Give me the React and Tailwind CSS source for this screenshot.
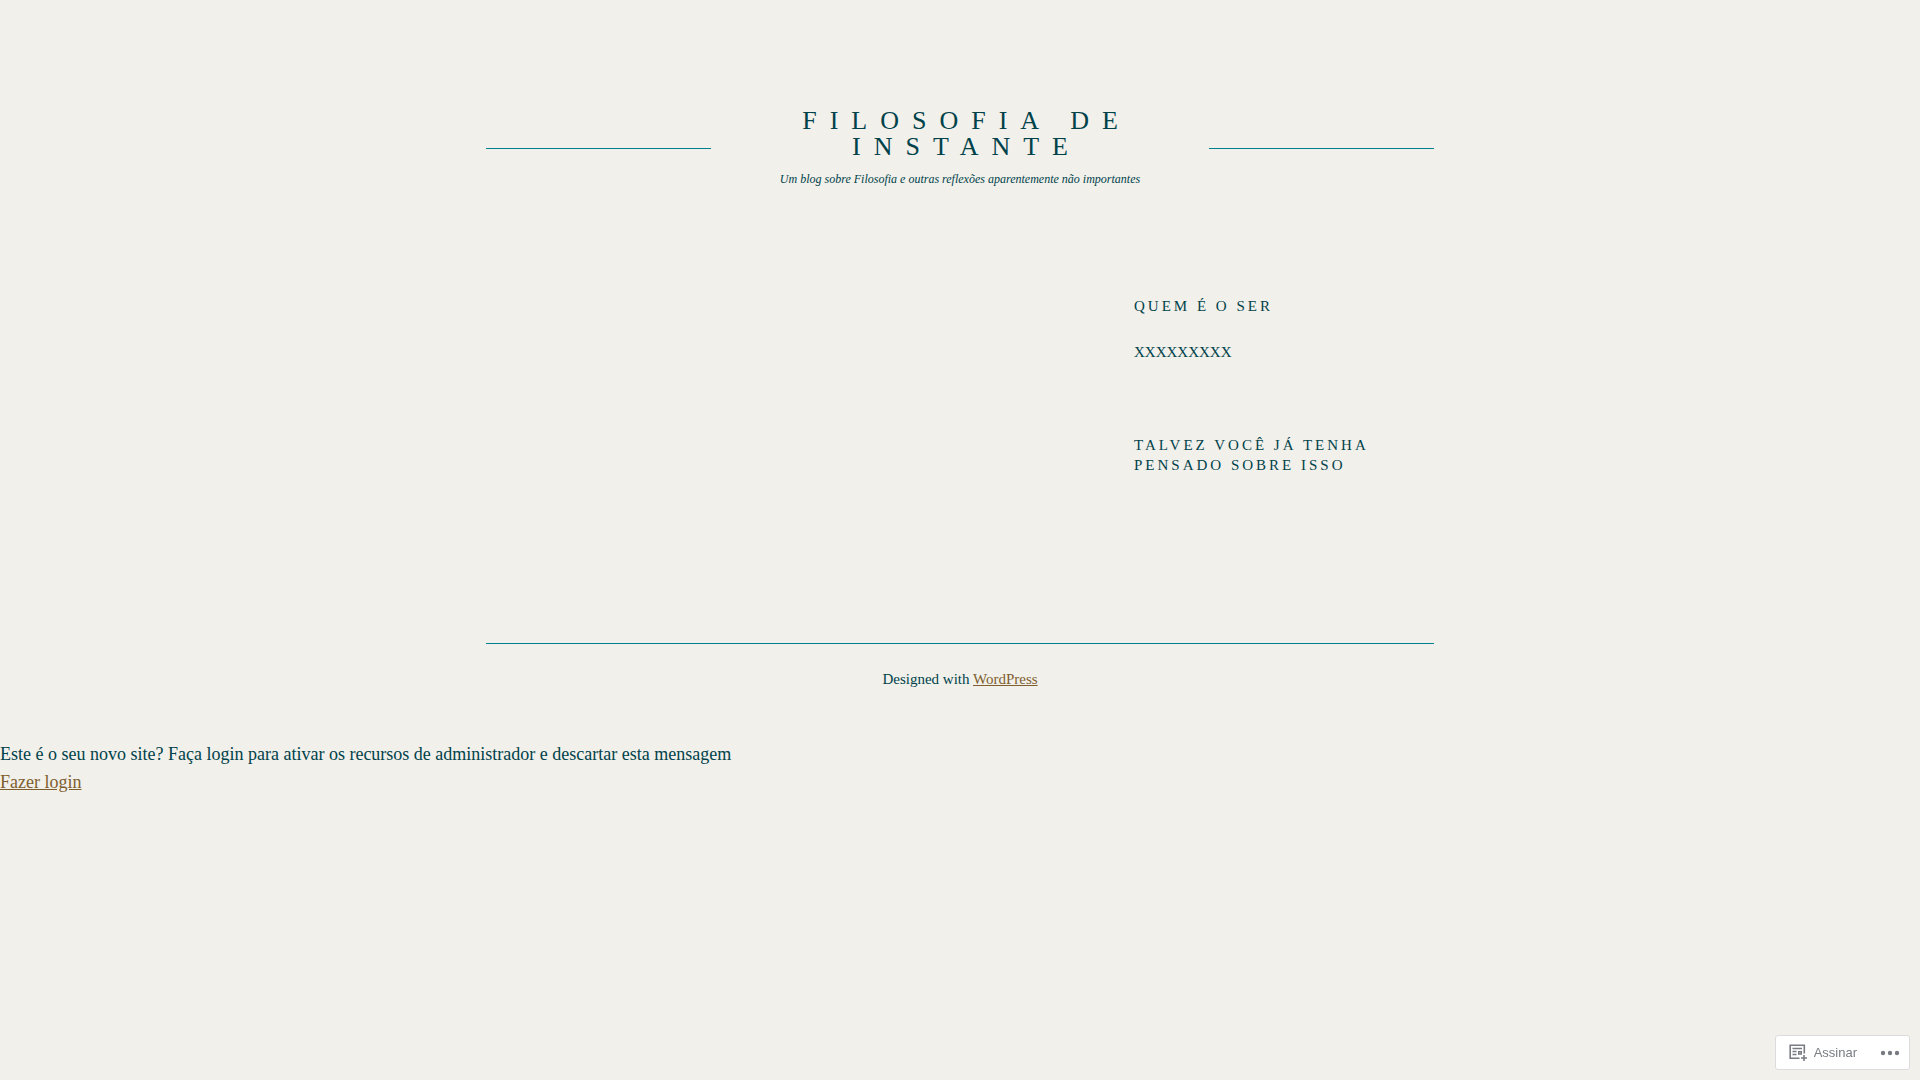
const linkClass = 'text-[#7e5e2f] underline'

function Header() {
  return (
    <header className="grid grid-cols-4 items-center gap-4">
      <hr className="border-t border-[#007f8e]" />
      <div className="col-span-2 text-center">
        <h1 className="pl-[13px] text-[26px] leading-[26px] tracking-[13px] uppercase">
          Filosofia de Instante
        </h1>
        <p className="mt-[9px] text-[12px] leading-5 italic">
          Um blog sobre Filosofia e outras reflexões aparentemente não importantes
        </p>
      </div>
      <hr className="border-t border-[#007f8e]" />
    </header>
  )
}

function Sidebar() {
  return (
    <aside className="ml-auto w-[300px] text-[15px] leading-5">
      <h2 className="tracking-[3px] uppercase">Quem é o ser</h2>
      <p className="mt-6 leading-6">XXXXXXXXX</p>
      <h2 className="mt-[71px] tracking-[3px] uppercase">Talvez você já tenha pensado sobre isso</h2>
    </aside>
  )
}

function FollowIcon() {
  return (
    <svg width="18" height="18" viewBox="0 0 18 18" fill="none" stroke="#787c82" aria-hidden="true">
      <path d="M10.5 14.2H1.2V1.2H15.3V9.5" strokeWidth="1.6" />
      <path d="M3.5 4.5H13M3.5 7.5H7.5M3.5 10.5H7.5" strokeWidth="1.4" />
      <path d="M9.7 7.7H12.3V10H9.7Z" strokeWidth="1.4" />
      <path d="M15 11V17M12 14H18" strokeWidth="1.6" />
    </svg>
  )
}

function DotsIcon() {
  return (
    <svg width="22" height="8" viewBox="0 0 22 8" fill="currentColor" aria-hidden="true">
      <circle cx="4" cy="4" r="2.2" />
      <circle cx="11" cy="4" r="2.2" />
      <circle cx="18" cy="4" r="2.2" />
    </svg>
  )
}

function ActionBar() {
  return (
    <div className="fixed right-[10px] bottom-[10px] flex h-[35px] items-center rounded-[3px] border border-[#dcdcde] bg-white font-['Liberation_Sans',sans-serif] text-[13px] text-[#787c82]">
      <button type="button" className="flex h-full items-center gap-[7px] pl-[13px]">
        <FollowIcon />
        Assinar
      </button>
      <button type="button" aria-label="Mais" className="ml-[22px] flex h-full items-center pr-2">
        <DotsIcon />
      </button>
    </div>
  )
}

export default function App() {
  return (
    <div className="min-h-screen bg-[#f1f0ea] font-['Liberation_Serif',serif] text-[#00424a]">
      <div className="mx-auto max-w-[948px] pt-[108px]">
        <Header />
        <main className="pt-[107px]">
          <Sidebar />
        </main>
        <footer className="mt-[168px] border-t border-[#007f8e] pt-[23px] text-center text-[15px] leading-6">
          Designed with <a href="#wordpress" className={linkClass}>WordPress</a>
        </footer>
      </div>
      <div className="mt-[49px] text-[18px] leading-7">
        <p>Este é o seu novo site? Faça login para ativar os recursos de administrador e descartar esta mensagem</p>
        <a href="#login" className={linkClass}>Fazer login</a>
      </div>
      <ActionBar />
    </div>
  )
}
